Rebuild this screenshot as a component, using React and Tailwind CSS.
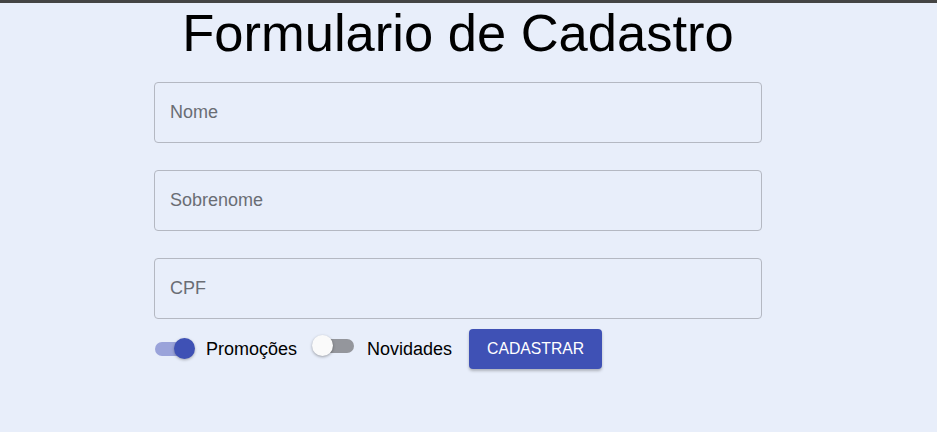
import { useState } from "react";

function Field({ label }) {
  return (
    <div className="h-[61px] w-full rounded-[4px] border border-[#b4b8c2] flex items-center pl-[15px]">
      <span className="text-[18px] text-[#6a6d74]">{label}</span>
    </div>
  );
}

function Toggle({ on, onClick }) {
  return (
    <button onClick={onClick} className="relative w-[42px] h-[22px] shrink-0">
      <span
        className={
          on
            ? "absolute left-[1px] top-[4px] w-[36px] h-[14px] rounded-full bg-[#9aa3da]"
            : "absolute left-[6px] top-[4px] w-[36px] h-[14px] rounded-full bg-[#94969c]"
        }
      />
      <span
        className={
          on
            ? "absolute left-[20px] top-[0px] w-[21px] h-[21px] rounded-full bg-[#3f51b5] shadow-[0_1px_3px_rgba(0,0,0,0.3)]"
            : "absolute left-[0px] top-[0px] w-[21px] h-[21px] rounded-full bg-[#fafafa] shadow-[0_1px_3px_rgba(0,0,0,0.35)]"
        }
      />
    </button>
  );
}

export default function App() {
  const [promo, setPromo] = useState(true);
  const [novid, setNovid] = useState(false);

  return (
    <div className="min-h-[432px] bg-[#e8eefa] font-['Liberation_Sans',Arial,sans-serif] text-black">
      <div className="h-[3px] bg-[#444444]" />
      <div className="ml-[154px] w-[608px] flex flex-col">
        <h1 className="text-[52.5px] leading-[59px] text-center">Formulario de Cadastro</h1>
        <div className="mt-[20px] flex flex-col gap-[27px]">
          <Field label="Nome" />
          <Field label="Sobrenome" />
          <Field label="CPF" />
        </div>
        <div className="mt-[10px] flex items-center">
          <Toggle on={promo} onClick={() => setPromo(!promo)} />
          <span className="ml-[10px] text-[18px]">Promoções</span>
          <div className="ml-[15px]">
            <Toggle on={novid} onClick={() => setNovid(!novid)} />
          </div>
          <span className="ml-[13px] text-[18px]">Novidades</span>
          <button className="ml-[17px] h-[40px] px-[18px] rounded-[4px] bg-[#3f51b5] text-white text-[15.75px] uppercase shadow-[0_2px_3px_rgba(0,0,0,0.25)]">
            Cadastrar
          </button>
        </div>
      </div>
    </div>
  );
}
